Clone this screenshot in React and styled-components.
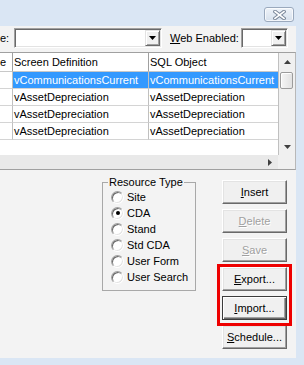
import React from "react";
import styled, { createGlobalStyle, css } from "styled-components";

const GlobalStyle = createGlobalStyle`
  html, body { margin: 0; padding: 0; }
  body {
    background: #dae6f4;
    font-family: "Liberation Sans", Arial, sans-serif;
    font-size: 11px;
    color: #000;
  }
`;

const Window = styled.div`
  width: 304px;
  height: 365px;
  display: flex;
  flex-direction: column;
  background: #dae6f4;
  overflow: hidden;
`;

const TitleBar = styled.div`
  flex: none;
  height: 26px;
  box-sizing: border-box;
  padding: 7px 10px 0 0;
  display: flex;
  justify-content: flex-end;
  align-items: flex-start;
`;

const CloseButton = styled.div`
  width: 30px;
  height: 15px;
  box-sizing: border-box;
  border: 1px solid #9aa9bd;
  border-radius: 3px;
  background: linear-gradient(#eef3f9, #d7e1ed);
  box-shadow: inset 0 0 0 1px rgba(255, 255, 255, 0.7);
  display: flex;
  align-items: center;
  justify-content: center;
`;

const Client = styled.div`
  flex: 1;
  margin: 0 8px 7px 0;
  background: #f3f3f3;
  display: flex;
  flex-direction: column;
`;

const FilterRow = styled.div`
  margin-top: 2px;
  height: 20px;
  display: flex;
  align-items: center;
`;

const Label = styled.span`
  flex: none;
  width: ${(p) => p.$width}px;
  margin-left: ${(p) => p.$offset || 0}px;
  white-space: nowrap;
  line-height: 13px;
`;

const Combo = styled.div`
  flex: none;
  width: ${(p) => p.$width}px;
  height: 20px;
  box-sizing: border-box;
  border: 1px solid;
  border-color: #a0a0a0 #ffffff #ffffff #a0a0a0;
  box-shadow: inset 1px 1px 0 #696969, inset -1px -1px 0 #e3e3e3;
  background: #fff;
  display: flex;
  justify-content: flex-end;
  padding: 1px;
`;

const ComboButton = styled.div`
  width: 15px;
  height: 16px;
  box-sizing: border-box;
  background: #f0f0f0;
  border: 1px solid;
  border-color: #e3e3e3 #696969 #696969 #e3e3e3;
  box-shadow: inset 1px 1px 0 #ffffff, inset -1px -1px 0 #a0a0a0;
  display: flex;
  align-items: center;
  justify-content: center;
`;

const GridFrame = styled.div`
  margin-top: 4px;
  width: 296px;
  box-sizing: border-box;
  display: grid;
  grid-template-columns: 278px 17px;
  grid-template-rows: 102px 14px;
  border-top: 1px solid #a0a0a0;
  border-bottom: 1px solid #a0a0a0;
  border-right: 1px solid #b8b8b8;
  background: #fff;
`;

const Table = styled.div`
  display: grid;
  grid-template-columns: 13px 136px 129px;
  grid-auto-rows: 17px;
  grid-template-rows: 19px;
  align-content: start;
  overflow: hidden;
`;

const HeaderCell = styled.div`
  box-sizing: border-box;
  border-right: ${(p) => (p.$last ? "none" : "1px solid #a0a0a0")};
  border-bottom: 1px solid #c8c8c8;
  padding-left: ${(p) => (p.$first ? 0 : 1)}px;
  line-height: 18px;
  white-space: nowrap;
  overflow: hidden;
`;

const Cell = styled.div`
  box-sizing: border-box;
  border-right: ${(p) => (p.$last ? "none" : "1px solid #c0c0c0")};
  border-bottom: 1px solid #d4d4d4;
  padding-left: 1px;
  line-height: 16px;
  white-space: nowrap;
  overflow: hidden;
  ${(p) =>
    p.$selected &&
    css`
      background: #3399ff;
      color: #fff;
    `}
`;

const VScroll = styled.div`
  box-sizing: border-box;
  border-left: 1px solid #c0c0c0;
  background: #f0f0f0;
  display: flex;
  flex-direction: column;
`;

const ScrollArrow = styled.div`
  flex: none;
  width: ${(p) => p.$w}px;
  height: ${(p) => p.$h}px;
  display: flex;
  align-items: center;
  justify-content: center;
`;

const Thumb = styled.div`
  margin: 2px 0 0 1px;
  width: 13px;
  height: 17px;
  box-sizing: border-box;
  border: 1px solid #9c9c9c;
  border-radius: 2px;
  background: linear-gradient(to right, #f6f6f6, #e2e2e2);
  box-shadow: inset 1px 1px 0 #fff;
`;

const Spacer = styled.div`
  flex: 1;
`;

const HScroll = styled.div`
  background: #e9e9e9;
  display: flex;
  justify-content: flex-end;
`;

const Corner = styled.div`
  background: #f0f0f0;
`;

const Lower = styled.div`
  display: flex;
  align-items: flex-start;
  padding-left: 102px;
`;

const GroupBox = styled.fieldset`
  margin: 6px 0 0 0;
  width: 94px;
  box-sizing: border-box;
  border: 1px solid #a8a8a8;
  padding: 0 2px 5px 8px;
  min-inline-size: 0;
`;

const Legend = styled.legend`
  padding: 0 1px;
  margin-left: -3px;
  line-height: 13px;
`;

const RadioRow = styled.label`
  display: flex;
  align-items: center;
  gap: 3px;
  height: 16px;
  white-space: nowrap;
`;

const RadioCircle = styled.span`
  flex: none;
  width: 13px;
  height: 13px;
  box-sizing: border-box;
  border-radius: 50%;
  border: 1px solid;
  border-color: #a0a0a0 #ffffff #ffffff #a0a0a0;
  box-shadow: inset 1px 1px 0 #696969, inset -1px -1px 0 #e3e3e3;
  background: #fff;
  display: flex;
  align-items: center;
  justify-content: center;
  ${(p) =>
    p.$checked &&
    css`
      &::after {
        content: "";
        width: 4px;
        height: 4px;
        border-radius: 50%;
        background: #000;
      }
    `}
`;

const ButtonColumn = styled.div`
  margin: 10px 0 0 26px;
  display: flex;
  flex-direction: column;
  gap: 5px;
`;

const Highlight = styled.div`
  position: relative;
  display: flex;
  flex-direction: column;
  gap: 5px;
`;

const RedFrame = styled.span`
  position: absolute;
  top: -3px;
  left: -5px;
  right: -5px;
  bottom: -6px;
  border: 3px solid #ee0000;
  pointer-events: none;
`;

const Button = styled.div`
  width: 65px;
  height: 24px;
  box-sizing: border-box;
  background: #f0f0f0;
  border: 1px solid;
  border-color: #ffffff #696969 #696969 #ffffff;
  box-shadow: inset -1px -1px 0 #a0a0a0, inset 1px 1px 0 #e3e3e3;
  display: flex;
  align-items: center;
  justify-content: center;
  line-height: 13px;
  color: #000;
  ${(p) =>
    p.$disabled &&
    css`
      color: #a0a0a0;
      text-shadow: 1px 1px 0 #fff;
    `}
  ${(p) =>
    p.$default &&
    css`
      border-color: #3c3c3c;
      box-shadow: inset 1px 1px 0 #fff, inset -1px -1px 0 #696969,
        inset -2px -2px 0 #a0a0a0;
    `}
`;

const Tri = ({ dir, color = "#000" }) => {
  const pts = {
    down: ["0 0 7 4", "0,0 7,0 3.5,4"],
    up: ["0 0 7 4", "0,4 7,4 3.5,0"],
    right: ["0 0 4 7", "0,0 4,3.5 0,7"],
  }[dir];
  const [vb, p] = pts;
  const [, , w, h] = vb.split(" ");
  return (
    <svg width={w} height={h} viewBox={vb}>
      <polygon points={p} fill={color} />
    </svg>
  );
};

const CloseGlyph = () => (
  <svg width="13" height="10" viewBox="0 0 13 10">
    <g strokeLinecap="square">
      <line x1="2" y1="1.5" x2="11" y2="8.5" stroke="#7b889a" strokeWidth="3.6" />
      <line x1="11" y1="1.5" x2="2" y2="8.5" stroke="#7b889a" strokeWidth="3.6" />
      <line x1="2" y1="1.5" x2="11" y2="8.5" stroke="#ffffff" strokeWidth="1.6" />
      <line x1="11" y1="1.5" x2="2" y2="8.5" stroke="#ffffff" strokeWidth="1.6" />
    </g>
  </svg>
);

const rows = [
  ["vCommunicationsCurrent", "vCommunicationsCurrent", true],
  ["vAssetDepreciation", "vAssetDepreciation", false],
  ["vAssetDepreciation", "vAssetDepreciation", false],
  ["vAssetDepreciation", "vAssetDepreciation", false],
];

const resourceTypes = ["Site", "CDA", "Stand", "Std CDA", "User Form", "User Search"];

export default function App() {
  return (
    <>
      <GlobalStyle />
      <Window>
        <TitleBar>
          <CloseButton>
            <CloseGlyph />
          </CloseButton>
        </TitleBar>
        <Client>
          <FilterRow>
            <Label $width={14}>e:</Label>
            <Combo $width={148}>
              <ComboButton>
                <Tri dir="down" />
              </ComboButton>
            </Combo>
            <Label $width={71} $offset={8}>
              <u>W</u>eb Enabled:
            </Label>
            <Combo $width={47}>
              <ComboButton>
                <Tri dir="down" />
              </ComboButton>
            </Combo>
          </FilterRow>

          <GridFrame>
            <Table>
              <HeaderCell $first>e</HeaderCell>
              <HeaderCell>Screen Definition</HeaderCell>
              <HeaderCell $last>SQL Object</HeaderCell>
              {rows.map(([a, b, sel], i) => (
                <React.Fragment key={i}>
                  <Cell />
                  <Cell $selected={sel}>{a}</Cell>
                  <Cell $selected={sel} $last>
                    {b}
                  </Cell>
                </React.Fragment>
              ))}
            </Table>
            <VScroll>
              <ScrollArrow $w={16} $h={17}>
                <Tri dir="up" color="#404040" />
              </ScrollArrow>
              <Thumb />
              <Spacer />
              <ScrollArrow $w={16} $h={17}>
                <Tri dir="down" color="#404040" />
              </ScrollArrow>
            </VScroll>
            <HScroll>
              <ScrollArrow $w={17} $h={14}>
                <Tri dir="right" color="#404040" />
              </ScrollArrow>
            </HScroll>
            <Corner />
          </GridFrame>

          <Lower>
            <GroupBox>
              <Legend>Resource Type</Legend>
              {resourceTypes.map((t) => (
                <RadioRow key={t}>
                  <RadioCircle $checked={t === "CDA"} />
                  {t}
                </RadioRow>
              ))}
            </GroupBox>
            <ButtonColumn>
              <Button>
                <span><u>I</u>nsert</span>
              </Button>
              <Button $disabled>
                <span><u>D</u>elete</span>
              </Button>
              <Button $disabled>
                <span><u>S</u>ave</span>
              </Button>
              <Highlight>
                <Button>
                  <span><u>E</u>xport...</span>
                </Button>
                <Button $default>
                  <span><u>I</u>mport...</span>
                </Button>
                <RedFrame />
              </Highlight>
              <Button>
                <span><u>S</u>chedule...</span>
              </Button>
            </ButtonColumn>
          </Lower>
        </Client>
      </Window>
    </>
  );
}
